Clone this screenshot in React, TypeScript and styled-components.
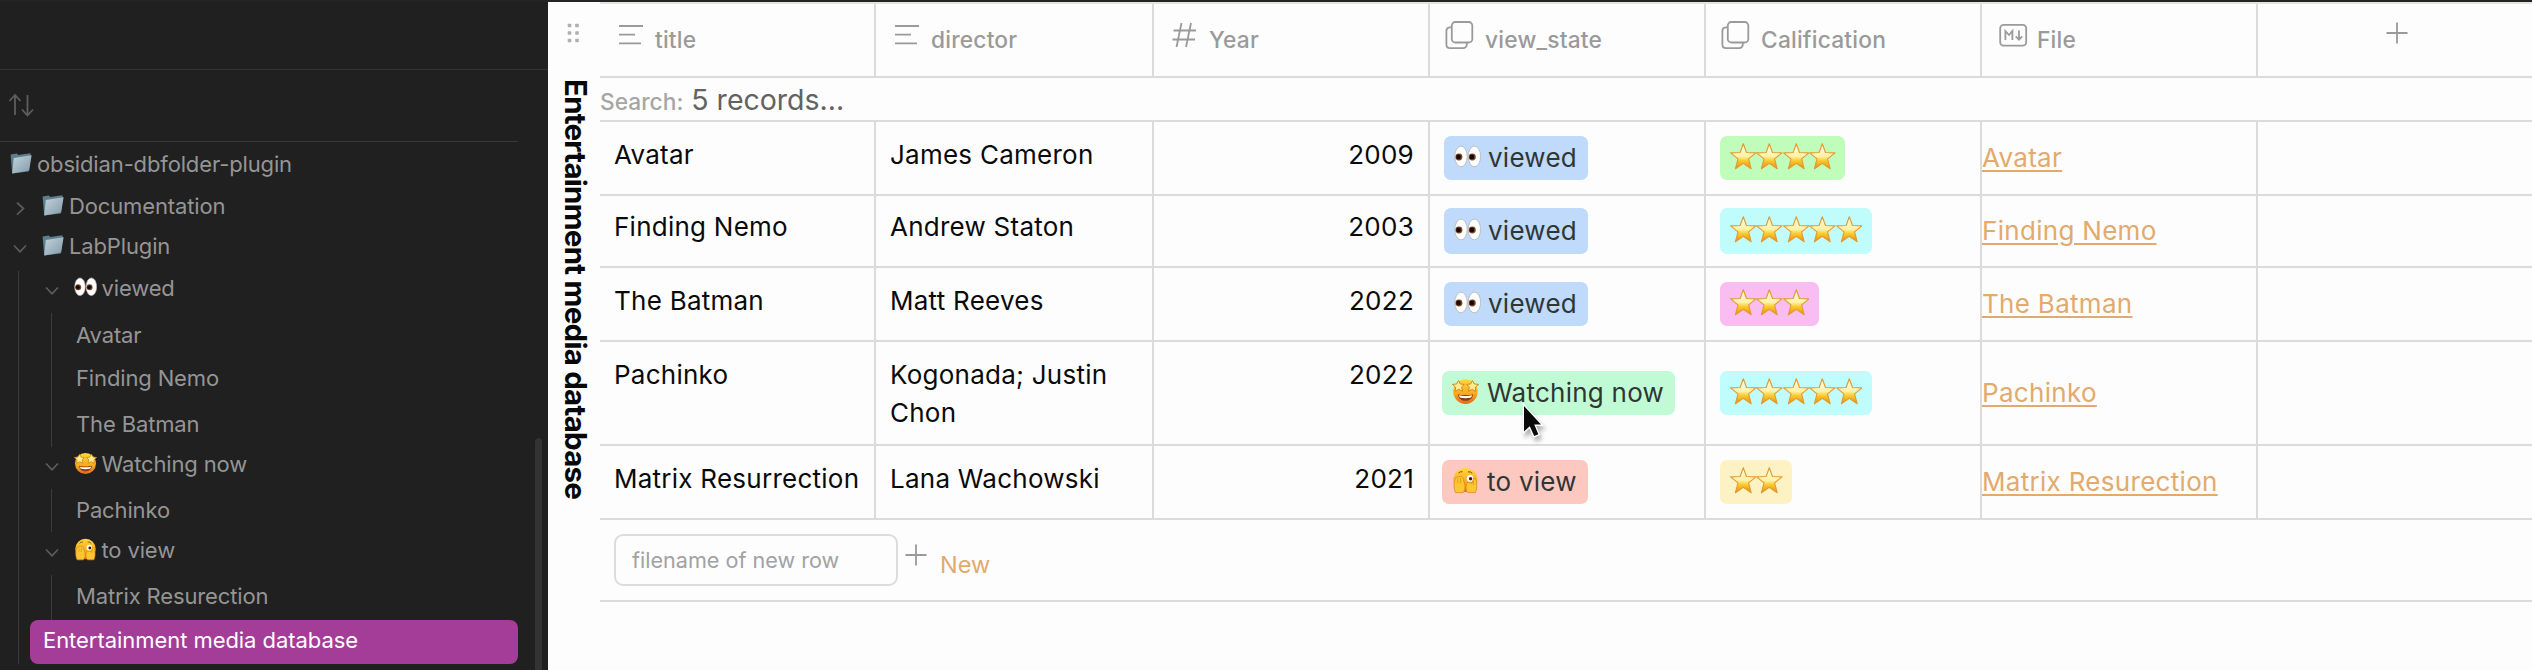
import React from "react";
import styled, { createGlobalStyle } from "styled-components";

const line = "#dbdbdb";
const muted = "#9a9a9a";
const accent = "#e2aa6c";

const GlobalStyle = createGlobalStyle`
  * { box-sizing: border-box; }
  body { margin: 0; overflow: hidden; }
`;

const Shell = styled.div`
  display: flex;
  width: 2532px;
  height: 670px;
  overflow: hidden;
  position: relative;
  border-top: 2px solid #242424;
  background: #fdfdfd;
  font-family: Inter, "Noto Sans", sans-serif;
`;

/* ---------- sidebar ---------- */

const Sidebar = styled.aside`
  position: relative;
  flex: none;
  width: 548px;
  height: 668px;
  background: #202020;
  color: #959595;
  font-size: 22px;
  letter-spacing: -0.14px;
`;

const SidebarTop = styled.div`
  height: 68px;
  border-bottom: 1px solid #343434;
`;

const SortBar = styled.div`
  display: flex;
  align-items: center;
  width: 518px;
  height: 72px;
  padding: 0 0 2px 7px;
  border-bottom: 1px solid #383838;
`;

const Tree = styled.div`
  padding-top: 2px;
  width: 518px;
`;

const TreeRow = styled.div<{ $gap?: number; $indent: number }>`
  display: flex;
  flex: none;
  align-items: center;
  height: 40px;
  margin-top: ${(p) => p.$gap ?? 0}px;
  padding-left: ${(p) => p.$indent}px;
  white-space: nowrap;
`;

const Chevron = styled.svg<{ $gap: number }>`
  flex: none;
  width: 14px;
  height: 14px;
  margin: 6px ${(p) => p.$gap}px 0 0;
  fill: none;
  stroke: #5c5c5c;
  stroke-width: 1.8;
`;

const TreeIcon = styled.span<{ $gap: number }>`
  display: flex;
  flex: none;
  margin: -2px ${(p) => p.$gap}px 0 0;
`;

const Branch = styled.div<{ $left: number; $bottom?: number }>`
  display: flex;
  flex-direction: column;
  margin: 5px 0 0 ${(p) => p.$left}px;
  padding-bottom: ${(p) => p.$bottom ?? 0}px;
  border-left: 1px solid #3b3b3b;
`;

const ActiveRow = styled.div`
  display: flex;
  align-items: center;
  height: 44px;
  margin-left: 11px;
  padding: 0 0 4px 13px;
  border-radius: 8px;
  background: #a33d97;
  color: #fff;
  letter-spacing: -0.05px;
`;

const ScrollThumb = styled.div`
  position: absolute;
  right: 6px;
  top: 436px;
  width: 7px;
  height: 260px;
  border-radius: 4px;
  background: #333;
`;

/* ---------- database view ---------- */

const Rail = styled.div`
  display: flex;
  flex-direction: column;
  flex: none;
  width: 52px;
  padding: 20px 0 0 15px;
`;

const RailTitle = styled.h1`
  margin: 33px 0 0 -5px;
  writing-mode: vertical-rl;
  width: 36px;
  font-size: 29.5px;
  line-height: 36px;
  font-weight: 700;
  letter-spacing: -0.75px;
  color: #080808;
  white-space: nowrap;
`;

const Table = styled.div`
  flex: 1;
  border-top: 2px solid #e4e4e0;
`;

const Row = styled.div<{ $h: number }>`
  display: grid;
  grid-template-columns: 276px 278px 276px 276px 276px 276px 1fr;
  height: ${(p) => p.$h}px;
  border-bottom: 2px solid ${line};
`;

const HeadCell = styled.div`
  display: flex;
  border-right: 2px solid ${line};
  padding: 0 0 0 10px;
  color: ${muted};
  font-size: 22.75px;
  font-weight: 500;
  letter-spacing: 0.2px;
  line-height: 36px;
`;

const HeadLabel = styled.span`
  margin: 18px 0 0 5px;
`;

const HeadIcon = styled.svg`
  flex: none;
  width: 40px;
  height: 40px;
  margin-top: 9px;
  fill: none;
  stroke: ${muted};
  stroke-width: 1.8;
`;

const AddColumn = styled.div`
  display: flex;
  padding: 17px 0 0 127px;
`;

const PlusSvg = styled.svg`
  width: 24px;
  height: 24px;
  fill: none;
  stroke: ${muted};
  stroke-width: 1.8;
`;

const SearchRow = styled.div`
  display: flex;
  align-items: baseline;
  height: 44px;
  padding: 2px 0 0;
  border-bottom: 2px solid ${line};
  line-height: 40px;
`;

const SearchLabel = styled.span`
  color: #a6a6a6;
  font-size: 22.75px;
  font-weight: 500;
`;

const SearchInfo = styled.span`
  margin-left: 8px;
  color: #626262;
  font-size: 28.5px;
`;

const Cell = styled.div<{ $top?: number; $right?: boolean }>`
  padding: ${(p) => p.$top ?? 13.5}px 14px 0;
  border-right: 2px solid ${line};
  color: #0a0a0a;
  font-size: 26px;
  line-height: 38px;
  letter-spacing: 0.25px;
  text-align: ${(p) => (p.$right ? "right" : "left")};
  &:first-child { padding-right: 0; white-space: nowrap; }
`;

const TagCell = styled.div<{ $left: number }>`
  display: flex;
  align-items: center;
  padding-left: ${(p) => p.$left}px;
  border-right: 2px solid ${line};
`;

const Tag = styled.span<{ $bg: string; $tall?: boolean }>`
  display: flex;
  align-items: center;
  height: ${(p) => (p.$tall ? 46 : 44)}px;
  padding: 0 11px 3px 10px;
  border-radius: 7px;
  background: ${(p) => p.$bg};
  color: #303632;
  font-size: 26px;
  letter-spacing: 0.25px;
  white-space: nowrap;
`;

const TagText = styled.span<{ $gap: number }>`
  margin: 0 0 -2px ${(p) => p.$gap}px;
`;

const StarTag = styled(Tag)`
  padding: 0 9.5px 4px;
`;

const LinkCell = styled.div`
  display: flex;
  align-items: center;
  padding-bottom: 2px;
  border-right: 2px solid ${line};
`;

const Link = styled.a`
  color: ${accent};
  font-size: 26px;
  letter-spacing: 0.3px;
  text-decoration: underline;
  text-decoration-thickness: 2px;
  text-underline-offset: 3px;
  white-space: nowrap;
`;

const Footer = styled.div`
  display: flex;
  height: 82px;
  padding: 14px 0 0 14px;
  border-bottom: 2px solid ${line};
`;

const NameInput = styled.input`
  width: 284px;
  height: 52px;
  padding: 0 0 1px 16px;
  border: 2px solid #dcdcdc;
  border-radius: 9px;
  background: transparent;
  font: 400 21.6px Inter, sans-serif;
  outline: none;
  &::placeholder { color: #a2a2a2; opacity: 1; }
`;

const NewButton = styled.span`
  display: flex;
  padding: 9px 0 0 6px;
`;

const NewLabel = styled.span`
  margin: 8px 0 0 12px;
  color: ${accent};
  font-size: 23.5px;
  line-height: 28px;
`;

const Cursor = styled.svg`
  position: absolute;
  left: 1518px;
  top: 398px;
  width: 32px;
  height: 44px;
  filter: drop-shadow(2px 4px 2px rgba(0, 0, 0, 0.3));
`;

/* ---------- drawings ---------- */

const Star = () => (
  <svg width="26.6" height="27" viewBox="0 0 26.6 27" role="img" aria-label="⭐">
    <defs>
      <linearGradient id="starFill" x1="0" y1="0" x2="0" y2="1">
        <stop offset="0" stopColor="#fffbe8" />
        <stop offset="0.5" stopColor="#fff2a8" />
        <stop offset="0.68" stopColor="#fbc92e" />
        <stop offset="1" stopColor="#e98a0c" />
      </linearGradient>
    </defs>
    <path
      d="M13.3 .8 16.5 9.5 26 9.9 18.6 15.9 21.2 25.8 13.3 20.4 5.4 25.8 8 15.9 .6 9.9 10.1 9.5Z"
      fill="url(#starFill)"
      stroke="#e29a30"
      strokeWidth="1.1"
      strokeLinejoin="round"
    />
  </svg>
);

const Eyes = ({ size = 27 }: { size?: number }) => (
  <svg width={size} height={size * 0.85} viewBox="0 0 27 23" role="img" aria-label="👀">
    <ellipse cx="7" cy="11.5" rx="6.2" ry="10.4" fill="#fff" stroke="#b9b3ae" strokeWidth="0.8" />
    <ellipse cx="20.4" cy="11.5" rx="6.2" ry="10.4" fill="#fff" stroke="#b9b3ae" strokeWidth="0.8" />
    <circle cx="4.9" cy="12" r="3.5" fill="#7a4526" />
    <circle cx="18.3" cy="12" r="3.5" fill="#7a4526" />
    <circle cx="4.5" cy="12" r="2.4" fill="#150b08" />
    <circle cx="17.9" cy="12" r="2.4" fill="#150b08" />
  </svg>
);

const FaceFill = () => (
  <defs>
    <linearGradient id="faceFill" x1="0" y1="0" x2="0" y2="1">
      <stop offset="0" stopColor="#ffd93a" />
      <stop offset="0.6" stopColor="#fba81f" />
      <stop offset="1" stopColor="#e5661a" />
    </linearGradient>
  </defs>
);

const StarStruck = ({ size = 27 }: { size?: number }) => (
  <svg width={size} height={size} viewBox="0 0 27 27" role="img" aria-label="🤩">
    <FaceFill />
    <circle cx="13.5" cy="13.6" r="12.3" fill="url(#faceFill)" />
    <path d="M6 16.200C9 17.400 18 17.400 21 16.200 20.800 20.400 17.800 22.800 13.500 22.800 9.200 22.800 6.200 20.400 6 16.200Z" fill="#8a3f10" />
    <path d="M7 17.200C10 18.200 17 18.200 20 17.200 19.800 18.800 19.200 19.400 18.200 19.700 15 20.300 12 20.300 8.800 19.700 7.800 19.400 7.200 18.800 7 17.200Z" fill="#fff" />
    <path d="M6.6 2.6 8.4 6 12.2 6.4 9.6 9.2 10.6 13.2 6.8 11.4 3.2 13.4 3.6 9.2 .4 6.4 4.6 6Z" fill="#ffeb94" stroke="#d0810f" strokeWidth="0.9" />
    <path d="M20.4 2.6 22.4 6 26.6 6.4 23.4 9.2 23.8 13.4 20.2 11.4 16.4 13.2 17.4 9.2 14.8 6.4 18.6 6Z" fill="#ffeb94" stroke="#d0810f" strokeWidth="0.9" />
  </svg>
);

const Peeking = ({ size = 27 }: { size?: number }) => (
  <svg width={size} height={size} viewBox="0 0 27 27" role="img" aria-label="🫣">
    <FaceFill />
    <circle cx="13.5" cy="13" r="12" fill="url(#faceFill)" />
    <path d="M6.5 6q2-1.8 4-1.2M16 4.8q2.6-.4 4.2 1.4" fill="none" stroke="#8a4a10" strokeWidth="1" />
    <ellipse cx="18" cy="11.4" rx="3.2" ry="3.4" fill="#fff" />
    <circle cx="18.6" cy="11.8" r="1.7" fill="#3b1f0c" />
    <path
      d="M3.600 25.600C1.400 21 1.800 15 3.400 11q1-1.800 2.200-.4 1-2.200 2.600-.6 1.600-1.400 2.600.6L13 18q.6 4.800-1.800 7.600Z"
      fill="#fcc62f"
      stroke="#e08a1c"
      strokeWidth="0.8"
    />
    <path
      d="M23.400 25.600c2-4.600 1.600-10.200 0-14.200q-1-1.400-1.800.4L20 16.400 15.800 15q-2.200 2.600-1.800 6.200.2 2.800 1.800 4.400Z"
      fill="#fcc62f"
      stroke="#e08a1c"
      strokeWidth="0.8"
    />
    <path d="M5.8 11.4v5M8.6 11v5.4M21.4 13.4v4.6" stroke="#e08a1c" strokeWidth="0.7" />
  </svg>
);

const Folder = () => (
  <svg width="22" height="22" viewBox="0 0 22 22" role="img" aria-label="📁">
    <defs>
      <linearGradient id="folderFill" x1="0" y1="0" x2="1" y2="1">
        <stop offset="0" stopColor="#c3d5dc" />
        <stop offset="1" stopColor="#8299a9" />
      </linearGradient>
    </defs>
    <path d="M.6 2.6 7 1.6 8.2 3 20.4 1.2 20.8 4 18.6 19.4 2.2 21.4Z" fill="#5f7e8c" />
    <path d="M3.8 6 21.6 3.2 19.2 18.6 2.2 21.4Z" fill="url(#folderFill)" />
  </svg>
);

const Down = ({ gap }: { gap: number }) => (
  <Chevron $gap={gap} viewBox="0 0 14 14">
    <path d="M1 3.5 7 9.8 13 3.5" />
  </Chevron>
);

const Right = ({ gap }: { gap: number }) => (
  <Chevron $gap={gap} viewBox="0 0 14 14">
    <path d="M4 .6 10.4 6.6 4 12.6" />
  </Chevron>
);

type IconKind = "text" | "number" | "tags" | "markdown";

const ColumnIcon = ({ kind }: { kind: IconKind }) => (
  <HeadIcon viewBox="0 0 40 40">
    {kind === "text" && <path d="M9 13H33M9 21.700H25M9 30.300H31" />}
    {kind === "number" && <path d="M17.500 10 12.500 34M27 10 22 34M9.500 17.500H32M8.500 26.500H31" />}
    {kind === "tags" && (
      <>
        <rect x="11.8" y="9" width="20.5" height="20.5" rx="3.6" />
        <path d="M11.8 14.4H9.6q-3.2.4-3.2 3.6V31.5q0 3.6 3.6 3.6H23q3.6 0 3.8-3.6V29.5" />
      </>
    )}
    {kind === "markdown" && (
      <>
        <rect x="8.2" y="11.8" width="26" height="20.8" rx="3.4" />
        <path d="M13.4 27V18L17 22 20.400 18V27" />
        <path d="M27 17.500V26.500M23.800 23.400 27 26.800 30.200 23.400" />
      </>
    )}
  </HeadIcon>
);

const Plus = () => (
  <PlusSvg viewBox="0 0 24 24">
    <path d="M12 1.5V22.5M1.5 12H22.5" />
  </PlusSvg>
);

/* ---------- data ---------- */

type State = "viewed" | "Watching now" | "to view";

const columns: { label: string; kind: IconKind }[] = [
  { label: "title", kind: "text" },
  { label: "director", kind: "text" },
  { label: "Year", kind: "number" },
  { label: "view_state", kind: "tags" },
  { label: "Calification", kind: "tags" },
  { label: "File", kind: "markdown" },
];

const stateColor: Record<State, string> = {
  viewed: "#bfdafb",
  "Watching now": "#c1fbd6",
  "to view": "#fcc8c0",
};

const starColor: Record<number, string> = {
  2: "#fcf2c4",
  3: "#fabdf2",
  4: "#c0fdbb",
  5: "#bffcfb",
};

const records: {
  title: string;
  director: string;
  year: number;
  state: State;
  stars: number;
  file: string;
  height: number;
}[] = [
  { title: "Avatar", director: "James Cameron", year: 2009, state: "viewed", stars: 4, file: "Avatar", height: 74 },
  { title: "Finding Nemo", director: "Andrew Staton", year: 2003, state: "viewed", stars: 5, file: "Finding Nemo", height: 72 },
  { title: "The Batman", director: "Matt Reeves", year: 2022, state: "viewed", stars: 3, file: "The Batman", height: 74 },
  { title: "Pachinko", director: "Kogonada; Justin Chon", year: 2022, state: "Watching now", stars: 5, file: "Pachinko", height: 104 },
  { title: "Matrix Resurrection", director: "Lana Wachowski", year: 2021, state: "to view", stars: 2, file: "Matrix Resurection", height: 74 },
];

const StateIcon = ({ state, size }: { state: State; size: number }) =>
  state === "viewed" ? <Eyes size={size} /> : state === "Watching now" ? <StarStruck size={size} /> : <Peeking size={size} />;

const FolderRow = ({ state, gap }: { state: State; gap: number }) => (
  <TreeRow $gap={gap} $indent={26}>
    <Down gap={14.5} />
    <TreeIcon $gap={5}>
      <StateIcon state={state} size={23} />
    </TreeIcon>
    {state}
  </TreeRow>
);

export default function App() {
  return (
    <Shell>
      <GlobalStyle />
      <Sidebar>
        <SidebarTop />
        <SortBar>
          <svg width="28" height="26" viewBox="0 0 28 26" fill="none" stroke="#5e5e5e" strokeWidth="1.8">
            <path d="M8 23V3M2.5 9 8 3 13.5 9M20.5 3V23M15 17.5 20.5 23.5 26 17.5" />
          </svg>
        </SortBar>
        <Tree>
          <TreeRow $indent={10}>
            <TreeIcon $gap={5}><Folder /></TreeIcon>
            obsidian-dbfolder-plugin
          </TreeRow>
          <TreeRow $gap={2} $indent={13}>
            <Right gap={15} />
            <TreeIcon $gap={5}><Folder /></TreeIcon>
            Documentation
          </TreeRow>
          <TreeRow $indent={13}>
            <Down gap={15} />
            <TreeIcon $gap={5}><Folder /></TreeIcon>
            LabPlugin
          </TreeRow>
          <Branch $left={18}>
            <FolderRow state="viewed" gap={-3} />
            <Branch $left={32} $bottom={3}>
              <TreeRow $gap={2} $indent={24}>Avatar</TreeRow>
              <TreeRow $gap={3} $indent={24}>Finding Nemo</TreeRow>
              <TreeRow $gap={6} $indent={24}>The Batman</TreeRow>
            </Branch>
            <FolderRow state="Watching now" gap={-3} />
            <Branch $left={32} $bottom={2}>
              <TreeRow $gap={1} $indent={24}>Pachinko</TreeRow>
            </Branch>
            <FolderRow state="to view" gap={-2} />
            <Branch $left={32} $bottom={4}>
              <TreeRow $gap={1} $indent={24}>Matrix Resurection</TreeRow>
            </Branch>
            <ActiveRow>Entertainment media database</ActiveRow>
          </Branch>
        </Tree>
        <ScrollThumb />
      </Sidebar>

      <Rail>
        <svg width="20" height="24" viewBox="0 0 20 24" fill="#b0b0b0">
          {[3.5, 11, 18.5].map((y) => (
            <g key={y}>
              <rect x="4.7" y={y - 1.8} width="3.6" height="3.6" rx="0.8" />
              <rect x="12.2" y={y - 1.8} width="3.6" height="3.6" rx="0.8" />
            </g>
          ))}
        </svg>
        <RailTitle>Entertainment media database</RailTitle>
      </Rail>

      <Table>
        <Row $h={74}>
          {columns.map((c) => (
            <HeadCell key={c.label}>
              <ColumnIcon kind={c.kind} />
              <HeadLabel>{c.label}</HeadLabel>
            </HeadCell>
          ))}
          <AddColumn>
            <Plus />
          </AddColumn>
        </Row>
        <SearchRow>
          <SearchLabel>Search:</SearchLabel>
          <SearchInfo>5 records...</SearchInfo>
        </SearchRow>
        {records.map((r) => (
          <Row key={r.title} $h={r.height}>
            <Cell $top={r.height === 72 ? 12 : undefined}>{r.title}</Cell>
            <Cell $top={r.height === 72 ? 12 : undefined}>{r.director}</Cell>
            <Cell $top={r.height === 72 ? 12 : undefined} $right>{r.year}</Cell>
            <TagCell $left={r.state === "viewed" ? 14 : 12}>
              <Tag $bg={stateColor[r.state]} $tall={r.height === 72}>
                <StateIcon state={r.state} size={27} />
                <TagText $gap={r.state === "viewed" ? 7 : 8}>{r.state}</TagText>
              </Tag>
            </TagCell>
            <TagCell $left={14}>
              <StarTag $bg={starColor[r.stars]} $tall={r.height === 72}>
                {Array.from({ length: r.stars }, (_, i) => (
                  <Star key={i} />
                ))}
              </StarTag>
            </TagCell>
            <LinkCell>
              <Link>{r.file}</Link>
            </LinkCell>
          </Row>
        ))}
        <Footer>
          <NameInput placeholder="filename of new row" />
          <NewButton>
            <Plus />
            <NewLabel>New</NewLabel>
          </NewButton>
        </Footer>
      </Table>

      <Cursor viewBox="0 0 32 44">
        <path
          d="M6 6V31.5L11.8 26.2 16.2 36 20.4 34.2 16.2 24.6H23Z"
          fill="#0a0a0a"
          stroke="#fff"
          strokeWidth="2.6"
          paintOrder="stroke"
        />
      </Cursor>
    </Shell>
  );
}
